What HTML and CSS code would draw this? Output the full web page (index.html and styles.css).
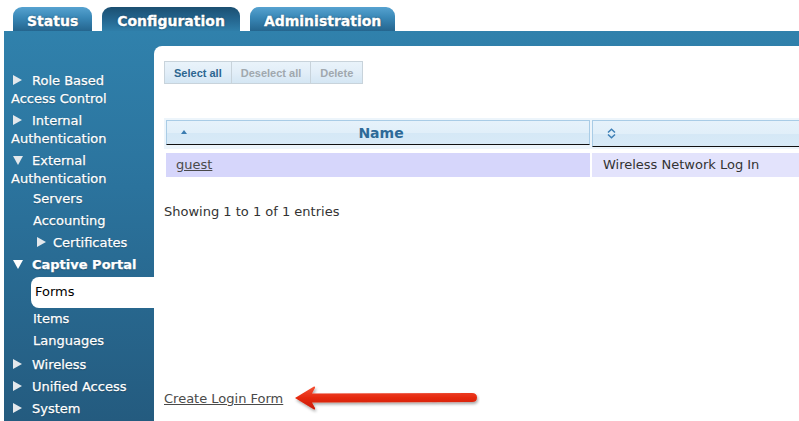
FILE: index.html
```html
<!DOCTYPE html>
<html lang="en">
  <head>
    <meta charset="UTF-8" />
    <title>Captive Portal Forms</title>
    <link rel="stylesheet" href="styles.css">
  </head>

  <body>
    <ul class="tabs">
      <li class="tab">Status</li>
      <li class="tab active">Configuration</li>
      <li class="tab">Administration</li>
    </ul>

    <div class="main">
      <ul class="menu">
        <li class="menu-row"><span class="tri"></span>Role Based Access Control</li>
        <li class="menu-row"><span class="tri"></span>Internal Authentication</li>
        <li class="menu-row open"><span class="tri down"></span>External Authentication</li>
        <li class="menu-row sub">Servers</li>
        <li class="menu-row sub">Accounting</li>
        <li class="menu-row sub-parent"><span class="tri"></span>Certificates</li>
        <li class="menu-row current"><span class="tri down"></span>Captive Portal</li>
        <li class="menu-row sub selected">Forms</li>
        <li class="menu-row sub">Items</li>
        <li class="menu-row sub last">Languages</li>
        <li class="menu-row"><span class="tri"></span>Wireless</li>
        <li class="menu-row"><span class="tri"></span>Unified Access</li>
        <li class="menu-row"><span class="tri"></span>System</li>
      </ul>

      <div class="content">
        <div class="btn-group">
          <button class="tool-btn enabled">Select all</button>
          <button class="tool-btn">Deselect all</button>
          <button class="tool-btn">Delete</button>
        </div>

        <div class="grid">
          <div class="grid-head">
            <div class="head-cell name-col">
              <span class="sort-up"></span>
              <span class="head-title">Name</span>
            </div>
            <div class="head-cell desc-col">
              <svg class="sort-both" width="9" height="11" viewBox="0 0 9 11">
                <polyline points="1,4.5 4.5,1.2 8,4.5" />
                <polyline points="1,6.5 4.5,9.8 8,6.5" />
              </svg>
            </div>
          </div>
          <div class="grid-row">
            <div class="cell name-col"><a href="#">guest</a></div>
            <div class="cell desc-col alt">Wireless Network Log In</div>
          </div>
        </div>

        <p class="info">Showing 1 to 1 of 1 entries</p>

        <div class="create-row">
          <a href="#">Create Login Form</a>
          <svg class="pointer" width="186" height="30" viewBox="0 0 186 30">
            <defs>
              <linearGradient id="redFill" x1="0" y1="0" x2="0" y2="1">
                <stop offset="0" stop-color="#f45236" />
                <stop offset="0.5" stop-color="#e5290f" />
                <stop offset="1" stop-color="#c81c06" />
              </linearGradient>
              <filter id="drop" x="-10%" y="-40%" width="120%" height="180%">
                <feDropShadow dx="1" dy="2" stdDeviation="1.5" flood-color="#000" flood-opacity="0.35" />
              </filter>
            </defs>
            <path filter="url(#drop)" fill="url(#redFill)"
              d="M1 14 L20 2.5 Q21.5 2 21 4 L18 9.5 L178 9 Q183 9 183 13.5 Q183 18 178 18 L18 18.5 L21 24 Q21.5 26 20 25.5 Z" />
          </svg>
        </div>
      </div>
    </div>
  </body>
</html>
```

FILE: styles.css
```css
body {
  margin: 0;
  font-family: "DejaVu Sans", Verdana, sans-serif;
  font-size: 13px;
  color: #333;
  background-color: #ffffff;
  overflow: hidden;
}

/* top tabs */
.tabs {
  display: flex;
  gap: 10px;
  list-style: none;
  margin: 0;
  padding: 7px 0 0 13px;
}

.tab {
  height: 20px;
  padding: 4px 14px 0;
  line-height: 20px;
  font-size: 14px;
  font-weight: bold;
  color: #ffffff;
  text-shadow: 0 0 2px rgba(0, 0, 0, 0.5);
  -webkit-text-stroke: 0.3px #ffffff;
  border-radius: 9px 9px 0 0;
  background: linear-gradient(#56a2d0, #3987b6 45%, #25658e);
}

.tab.active {
  padding: 4px 15px 0;
  background: linear-gradient(#1b4f71, #24658e 50%, #2f7ea9);
}

/* blue frame with the side menu */
.main {
  display: flex;
  margin-left: 4px;
  height: 390px;
  background: linear-gradient(#3081ac, #2b739d 40%, #245b7f);
}

.menu {
  flex: 0 0 150px;
  list-style: none;
  margin: 0;
  padding: 39px 0 0;
  color: #ffffff;
  text-shadow: 0 1px 1px rgba(0, 0, 0, 0.3);
  -webkit-text-stroke: 0.25px #ffffff;
}

.menu-row {
  padding: 2px 13px 2px 7px;
  line-height: 18px;
}

.menu-row.open {
  padding-bottom: 0;
}

.menu-row.current {
  font-weight: bold;
}

.menu-row.sub {
  padding-left: 29px;
}

.menu-row.sub-parent {
  padding-left: 33px;
}

.menu-row.sub-parent .tri {
  margin: 0 7px 0 0;
}

.menu-row.last {
  padding-bottom: 4px;
}

.menu-row.selected {
  margin: 1px 0 0 27px;
  padding: 6px 0 7px 4px;
  color: #000000;
  text-shadow: none;
  -webkit-text-stroke: 0;
  background-color: #ffffff;
  border-radius: 8px 0 0 8px;
}

.tri {
  display: inline-block;
  width: 0;
  height: 0;
  margin: 0 10px 0 2px;
  border-left: 9px solid #e4e8ec;
  border-top: 5px solid transparent;
  border-bottom: 5px solid transparent;
}

.tri.down {
  border-left: 5px solid transparent;
  border-right: 5px solid transparent;
  border-top: 9px solid #e4e8ec;
  border-bottom: 0;
  margin-right: 9px;
}

.current .tri.down {
  border-top-color: #ffffff;
}

/* white content panel */
.content {
  flex: 1;
  margin-top: 15px;
  padding: 15px 10px;
  background-color: #ffffff;
  border-top-left-radius: 8px;
  overflow: hidden;
}

.btn-group {
  display: flex;
}

.tool-btn {
  height: 23px;
  padding: 0 9px;
  margin-right: -1px;
  font-family: "Liberation Sans", Arial, sans-serif;
  font-size: 11px;
  font-weight: bold;
  color: #a0a8ae;
  border: 1px solid #c8d3db;
  background: linear-gradient(#e9f3fa, #e2eef8 50%, #d4e6f3);
}

.tool-btn.enabled {
  color: #2c6690;
}

.grid {
  width: 720px;
  margin-top: 34px;
}

.grid-head {
  display: flex;
  gap: 2px;
  padding: 2px;
  background-color: #edf5fb;
}

.head-cell {
  display: flex;
  align-items: center;
  height: 25px;
  border: 1px solid #a9cce6;
  border-bottom-color: #111111;
  background: linear-gradient(#e6f2fb, #e1eff9 50%, #d5e8f6 52%, #d8eaf7);
}

.name-col {
  flex: 0 0 424px;
  box-sizing: border-box;
}

.desc-col {
  flex: 1;
}

.head-cell.name-col {
  padding: 0 14px 0 14px;
}

.head-cell.desc-col {
  padding-left: 14px;
}

.sort-up {
  width: 0;
  height: 0;
  border-left: 3.5px solid transparent;
  border-right: 3.5px solid transparent;
  border-bottom: 4px solid #3a7bb0;
  margin-top: -2px;
}

.head-title {
  flex: 1;
  text-align: center;
  font-size: 14px;
  font-weight: bold;
  color: #2e6a98;
}

.sort-both polyline {
  fill: none;
  stroke: #3d7fb5;
  stroke-width: 1.5;
}

.grid-row {
  display: flex;
  gap: 2px;
  margin-top: 4px;
  padding: 0 2px;
}

.cell {
  height: 24px;
  line-height: 24px;
  padding-left: 10px;
  background-color: #d6d6fb;
}

.cell.alt {
  padding-left: 11px;
  background-color: #e3e3fc;
}

a {
  color: #4a4a4a;
}

.info {
  margin: 26px 0 0;
  line-height: 18px;
}

.create-row {
  display: flex;
  align-items: center;
  gap: 11px;
  margin-top: 163px;
  line-height: 18px;
}

.pointer {
  display: block;
}
```
